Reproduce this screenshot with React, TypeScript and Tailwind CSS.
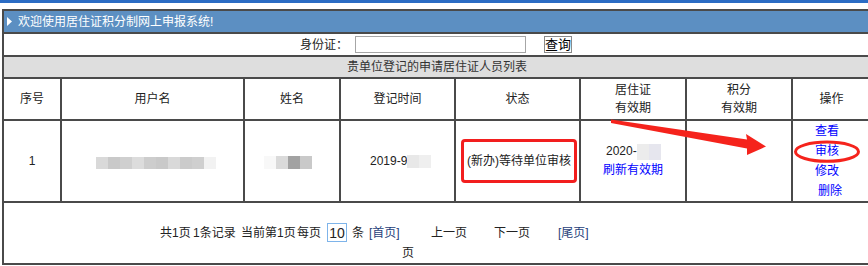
import React from "react";

function Mosaic({ colors, w = 12, h = 12 }: { colors: string[]; w?: number; h?: number }) {
  return (
    <span className="inline-flex">
      {colors.map((c, i) => (
        <span key={i} style={{ background: c, width: w, height: h }} className="block" />
      ))}
    </span>
  );
}

export default function App() {
  const cell = "bg-white flex items-center justify-center text-center";
  return (
    <div className="relative w-[868px] h-[266px] overflow-hidden bg-white font-['Liberation_Sans','Noto_Sans_CJK_SC',sans-serif] text-[12px] text-[#222]">
      <div className="h-[3px] bg-[#2b6cc4]" />
      <div className="mt-[6px] ml-[2px] w-[870px] bg-[#4a4a4a] p-[2px] grid gap-[2px] grid-cols-[56px_181px_94px_113px_123px_104px_104px_1fr] grid-rows-[21px_21px_20px_40px_80px_60px]">
        {/* title bar */}
        <div className="col-span-8 bg-[#5c8fc2] flex items-center pl-[3px] text-white">
          <svg width="5" height="9" viewBox="0 0 5 9" className="block">
            <path d="M0 0 L5 4.5 L0 9 Z" fill="#fff" />
          </svg>
          <span className="ml-[6px] leading-none">欢迎使用居住证积分制网上申报系统!</span>
        </div>
        {/* search row */}
        <div className="col-span-8 bg-white flex items-center pl-[296px]">
          <span className="w-[55px]">身份证：</span>
          <span className="block w-[171px] h-[17px] border border-[#a6a6a6] bg-white" />
          <span className="ml-[18px] w-[28px] h-[17px] border border-[#8a8a8a] bg-white flex items-center justify-center text-[13px] text-black leading-none">
            查询
          </span>
        </div>
        {/* list title */}
        <div className="col-span-8 bg-[#dedede] flex items-center justify-center text-[#333]">
          贵单位登记的申请居住证人员列表
        </div>
        {/* header */}
        <div className={cell}>序号</div>
        <div className={cell}>用户名</div>
        <div className={cell}>姓名</div>
        <div className={cell}>登记时间</div>
        <div className={cell}>状态</div>
        <div className={cell + " leading-[18px]"}>
          居住证
          <br />
          有效期
        </div>
        <div className={cell + " leading-[18px]"}>
          积分
          <br />
          有效期
        </div>
        <div className={cell}>操作</div>
        {/* data row */}
        <div className={cell}>1</div>
        <div className="bg-white flex items-center pl-[34px] pt-[3px]">
          <Mosaic
            colors={["#d9d9d9", "#c9c9c9", "#cfcfcf", "#dcdcdc", "#cdcdcd", "#c9c9c9", "#d9d9d9", "#cbcbcb", "#cfcfcf", "#f2f2f2"]}
          />
        </div>
        <div className="bg-white flex items-center pl-[19px] pt-[3px]">
          <Mosaic colors={["#f8f8f8", "#dadada", "#a2a2a2", "#c9c9c9"]} h={13} />
        </div>
        <div className="bg-white flex items-center pl-[29px]">
          <span>2019-9</span>
          <Mosaic colors={["#e8e8e8", "#efefef"]} h={13} />
        </div>
        <div className="bg-white flex items-center pl-[5px]">
          <div className="w-[116px] h-[44px] border-[3px] border-[#f21e1e] rounded-[4px] flex items-center justify-center">
            <span className="whitespace-nowrap">(新办)等待单位审核</span>
          </div>
        </div>
        <div className="bg-white flex flex-col justify-center leading-[19px]">
          <div className="pl-[25px] flex items-center">
            <span>2020-</span>
            <Mosaic colors={["#ececec", "#e6e6ee"]} h={16} />
          </div>
          <div className="text-center text-[#0000ff]">刷新有效期</div>
        </div>
        <div className="bg-white" />
        <div className="bg-white flex flex-col items-center justify-center leading-[20px] text-[#0000ff] pr-[9px]">
          <span>查看</span>
          <span>审核</span>
          <span>修改</span>
          <span className="ml-[6px]">删除</span>
        </div>
        {/* pager */}
        <div className="col-span-8 bg-white pt-[19px] pl-[156px] leading-[20px]">
          <div className="flex items-center h-[21px] whitespace-nowrap">
            <span className="w-[33px]">共1页</span>
            <span className="w-[48px]">1条记录</span>
            <span className="w-[56px]">当前第1页</span>
            <span className="w-[30px]">每页</span>
            <span className="w-[25px]">
              <span className="flex items-center justify-center w-[20px] h-[19px] border border-[#7eb4ea] text-[14px] text-[#222] leading-none">
                10
              </span>
            </span>
            <span className="w-[17px]">条</span>
            <span className="w-[62px] text-[#1f3f7a]">[首页]</span>
            <span className="w-[63px]">上一页</span>
            <span className="w-[64px]">下一页</span>
            <span className="text-[#1f3f7a]">[尾页]</span>
          </div>
          <div className="pl-[242px]">页</div>
        </div>
      </div>
      {/* annotations */}
      <svg className="absolute left-0 top-0 pointer-events-none" width="868" height="266">
        <polygon
          points="611,119.5 747,139.5 746,134 766,146.5 747,155 747,148.5 611,123"
          fill="#f5231c"
        />
        <ellipse cx="827" cy="151.7" rx="31.5" ry="9.6" fill="none" stroke="#f5231c" strokeWidth="3" />
      </svg>
    </div>
  );
}
